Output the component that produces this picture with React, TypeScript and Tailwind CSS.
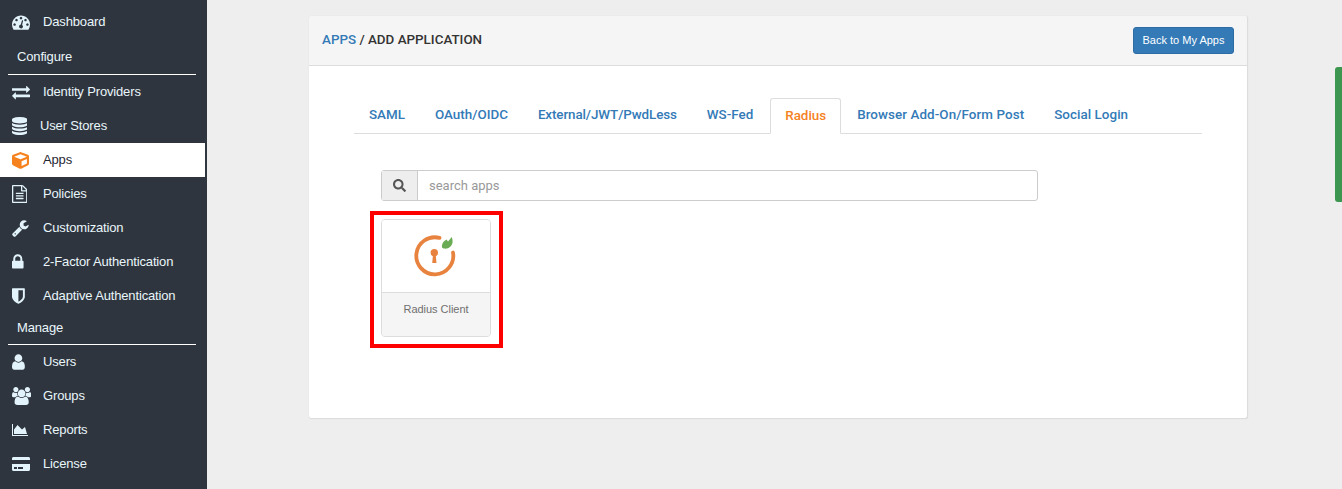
import { FaCreditCard, FaCube, FaSearch } from "react-icons/fa";

type Glyph = { box: [number, number]; size: number; d: string };

// font awesome 4 shapes, the sidebar uses these rather than the newer set
const glyphs: Record<string, Glyph> = {
  dashboard: { box: [0, 1792], size: 18, d: "M384 1152q0-53-37.500-90.500t-90.500-37.500-90.500 37.500-37.500 90.500 37.500 90.500 90.500 37.500 90.500-37.500 37.500-90.500zm192-448q0-53-37.500-90.500t-90.500-37.500-90.500 37.500-37.500 90.500 37.500 90.500 90.500 37.500 90.500-37.500 37.500-90.500zm428 481l101-382q6-26-7.500-48.500t-38.500-29.500-48 6.500-30 39.500l-101 382q-60 5-107 43.500t-63 98.500q-20 77 20 146t117 89 146-20 89-117q16-60-6-117t-72-91zm660-33q0-53-37.500-90.500t-90.500-37.500-90.500 37.500-37.500 90.500 37.500 90.500 90.500 37.500 90.500-37.500 37.500-90.500zm-640-640q0-53-37.500-90.500t-90.500-37.500-90.500 37.500-37.500 90.500 37.500 90.500 90.500 37.500 90.500-37.500 37.500-90.500zm448 192q0-53-37.500-90.500t-90.500-37.500-90.500 37.500-37.500 90.500 37.500 90.500 90.500 37.500 90.500-37.500 37.500-90.500zm320 448q0 261-141 483-19 29-54 29h-1402q-35 0-54-29-141-221-141-483 0-182 71-348t191-286 286-191 348-71 348 71 286 191 191 286 71 348z" },
  exchange: { box: [0, 1792], size: 18, d: "M1792 1184v192q0 13-9.500 22.500t-22.500 9.500h-1376v192q0 13-9.500 22.500t-22.500 9.500q-12 0-24-10l-319-320q-9-9-9-22 0-14 9-23l320-320q9-9 23-9 13 0 22.500 9.500t9.500 22.500v192h1376q13 0 22.500 9.500t9.500 22.500zm0-544q0 14-9 23l-320 320q-9 9-23 9-13 0-22.500-9.500t-9.500-22.500v-192h-1376q-13 0-22.500-9.500t-9.500-22.500v-192q0-13 9.500-22.500t22.500-9.500h1376v-192q0-14 9-23t23-9q12 0 24 10l319 319q9 9 9 23z" },
  database: { box: [128, 1536], size: 18, d: "M896 768q237 0 443-43t325-127v170q0 69-103 128t-280 93.500-385 34.500-385-34.500-280-93.500-103-128v-170q119 84 325 127t443 43zm0 768q237 0 443-43t325-127v170q0 69-103 128t-280 93.500-385 34.500-385-34.500-280-93.500-103-128v-170q119 84 325 127t443 43zm0-384q237 0 443-43t325-127v170q0 69-103 128t-280 93.500-385 34.500-385-34.500-280-93.500-103-128v-170q119 84 325 127t443 43zm0-1152q208 0 385 34.500t280 93.500 103 128v128q0 69-103 128t-280 93.500-385 34.500-385-34.500-280-93.500-103-128v-128q0-69 103-128t280-93.500 385-34.500z" },
  file: { box: [128, 1536], size: 18, d: "M1596 380q28 28 48 76t20 88v1152q0 40-28 68t-68 28h-1344q-40 0-68-28t-28-68v-1600q0-40 28-68t68-28h896q40 0 88 20t76 48zm-444-244v376h376q-10-29-22-41l-313-313q-12-12-41-22zm384 1528v-1024h-416q-40 0-68-28t-28-68v-416h-768v1536h1280zm-1024-864q0-14 9-23t23-9h704q14 0 23 9t9 23v64q0 14-9 23t-23 9h-704q-14 0-23-9t-9-23v-64zm736 224q14 0 23 9t9 23v64q0 14-9 23t-23 9h-704q-14 0-23-9t-9-23v-64q0-14 9-23t23-9h704zm0 256q14 0 23 9t9 23v64q0 14-9 23t-23 9h-704q-14 0-23-9t-9-23v-64q0-14 9-23t23-9h704z" },
  wrench: { box: [64, 1664], size: 18, d: "M448 1472q0-26-19-45t-45-19-45 19-19 45 19 45 45 19 45-19 19-45zm644-420l-682 682q-37 37-90 37-52 0-91-37l-106-108q-38-36-38-90 0-53 38-91l681-681q39 98 114.500 173.500t173.500 114.500zm634-435q0 39-23 106-47 134-164.500 217.500t-258.500 83.500q-185 0-316.500-131.500t-131.500-316.500 131.500-316.500 316.500-131.500q58 0 121.500 16.500t107.500 46.500q16 11 16 28t-16 28l-293 169v224l193 107q5-3 79-48.500t135.500-81 70.500-35.500q15 0 23.500 10t8.500 25z" },
  lock: { box: [320, 1152], size: 18, d: "M640 768h512v-192q0-106-75-181t-181-75-181 75-75 181v192zm832 96v576q0 40-28 68t-68 28h-960q-40 0-68-28t-28-68v-576q0-40 28-68t68-28h32v-192q0-184 132-316t316-132 316 132 132 316v192h32q40 0 68 28t28 68z" },
  shield: { box: [256, 1280], size: 18, d: "M1344 960v-640h-448v1137q119-63 213-137 235-184 235-360zm192-768v768q0 86-33.500 170.500t-83 150-118 127.500-126.500 103-121 77.500-89.500 49.500-42.500 20q-12 6-26 6t-26-6q-16-7-42.500-20t-89.500-49.500-121-77.500-126.500-103-118-127.500-83-150-33.500-170.500v-768q0-26 19-45t45-19h1152q26 0 45 19t19 45z" },
  user: { box: [256, 1280], size: 18, d: "M1536 1399q0 109-62.500 187t-150.500 78h-854q-88 0-150.500-78t-62.500-187q0-85 8.500-160.500t31.500-152 58.500-131 94-89 134.500-34.500q131 128 313 128t313-128q76 0 134.500 34.500t94 89 58.500 131 31.500 152 8.500 160.500zm-256-887q0 159-112.500 271.500t-271.500 112.500-271.500-112.500-112.500-271.500 112.500-271.500 271.500-112.500 271.500 112.500 112.500 271.500z" },
  group: { box: [0, 1920], size: 18, d: "M593 896q-162 5-265 128h-134q-82 0-138-40.500t-56-118.500q0-353 124-353 6 0 43.500 21t97.500 42.500 119 21.500q67 0 133-23-5 37-5 66 0 139 81 256zm1071 637q0 120-73 189.500t-194 69.500h-874q-121 0-194-69.500t-73-189.500q0-53 3.500-103.500t14-109 26.500-108.500 43-97.500 62-81 85.500-53.500 111.500-20q10 0 43 21.500t73 48 107 48 135 21.500 135-21.500 107-48 73-48 43-21.500q61 0 111.500 20t85.500 53.500 62 81 43 97.500 26.500 108.500 14 109 3.500 103.500zm-1024-1277q0 106-75 181t-181 75-181-75-75-181 75-181 181-75 181 75 75 181zm704 384q0 159-112.500 271.500t-271.500 112.500-271.500-112.500-112.500-271.500 112.500-271.500 271.500-112.500 271.500 112.500 112.500 271.500zm576 225q0 78-56 118.500t-138 40.500h-134q-103-123-265-128 81-117 81-256 0-29-5-66 66 23 133 23 59 0 119-21.500t97.500-42.500 43.500-21q124 0 124 353zm-128-609q0 106-75 181t-181 75-181-75-75-181 75-181 181-75 181 75 75 181z" },
  chart: { box: [0, 2048], size: 14, d: "M2048 1536v128h-2048v-1536h128v1408h1920zm-384-1024l256 896h-1664v-576l448-576 576 576z" },
};

function Fa4({ name, className }: { name: string; className: string }) {
  const g = glyphs[name];
  return (
    <svg viewBox={`${g.box[0]} 0 ${g.box[1]} 1792`} height={g.size} width={(g.box[1] / 1792) * g.size} fill="currentColor" className={className}>
      <path d={g.d} />
    </svg>
  );
}

type NavItem = { label: string; icon: string; active?: boolean; tight?: boolean };

const configure: NavItem[] = [
  { label: "Identity Providers", icon: "exchange" },
  { label: "User Stores", icon: "database", tight: true },
  { label: "Apps", icon: "cube", active: true },
  { label: "Policies", icon: "file" },
  { label: "Customization", icon: "wrench" },
  { label: "2-Factor Authentication", icon: "lock" },
  { label: "Adaptive Authentication", icon: "shield" },
];

const manage: NavItem[] = [
  { label: "Users", icon: "user" },
  { label: "Groups", icon: "group" },
  { label: "Reports", icon: "chart" },
  { label: "License", icon: "card" },
];

const tabs = [
  { label: "SAML", cls: "px-[15px]" },
  { label: "OAuth/OIDC", cls: "px-[15px]" },
  { label: "External/JWT/PwdLess", cls: "px-[15px] tracking-[-0.1px]" },
  { label: "WS-Fed", cls: "pr-[17px] pl-[15px]" },
  { label: "Radius", active: true, cls: "px-[14px]" },
  { label: "Browser Add-On/Form Post", cls: "pr-[15px] pl-[16px] tracking-[0.08px]" },
  { label: "Social Login", cls: "px-[15px] tracking-[0.05px]" },
];

function NavIcon({ name, tone }: { name: string; tone: string }) {
  if (name === "card") return <FaCreditCard className={`text-[18px] ${tone}`} />;
  if (name === "cube") return <FaCube className={`text-[17px] ${tone}`} />;
  return <Fa4 name={name} className={tone} />;
}

function NavRow({ item }: { item: NavItem }) {
  const tone = item.active ? "text-[#f5821f]" : "text-[#e2f3fb]";
  return (
    <div className={`flex h-[34px] items-center pl-3 text-[13px] tracking-[-0.15px] ${item.active ? "w-[205px] bg-white text-[#1f2733]" : "text-[#e9f6fb]"}`}>
      <span className={`flex items-center ${item.tight ? "w-[28px]" : "w-[31px]"}`}>
        <NavIcon name={item.icon} tone={tone} />
      </span>
      <span>{item.label}</span>
    </div>
  );
}

function SectionTitle({ label, box }: { label: string; box: string }) {
  return (
    <div className={`mr-[11px] ml-2 flex items-center border-b border-white pl-[9px] text-[13px] tracking-[-0.15px] text-[#e9f6fb] ${box}`}>
      {label}
    </div>
  );
}

function RadiusLogo() {
  return (
    <svg width="44" height="44" viewBox="0 0 44 44" fill="none">
      <path d="M25.500 3.900 A18.500 18.500 0 1 0 39 18.500" stroke="#e8833f" strokeWidth="3.800" strokeLinecap="round" />
      <circle cx="20.300" cy="18.700" r="3.700" fill="#e8833f" />
      <path d="M19 20.500h2.700l.8 8.500h-4.300z" fill="#e8833f" />
      <path d="M28 13.500c-.5-3.500 1.500-6.500 4.500-8l1.500 2 3.800-4.500c1.500 4 1 7.500-1.500 9.800-2.300 2-6 2.700-8.300.7z" fill="#6aab55" />
    </svg>
  );
}

export default function App() {
  return (
    <div className="relative flex h-[489px] w-[1342px] overflow-hidden bg-[#eeeeee] font-['Liberation_Sans',Arial,sans-serif]">
      <aside className="h-full w-[207px] shrink-0 bg-[#2f353e] pt-[5px]">
        <NavRow item={{ label: "Dashboard", icon: "dashboard" }} />
        <SectionTitle label="Configure" box="h-[36px]" />
        {configure.map((item) => (
          <NavRow key={item.label} item={item} />
        ))}
        <SectionTitle label="Manage" box="h-[32px] pb-[2px]" />
        {manage.map((item) => (
          <NavRow key={item.label} item={item} />
        ))}
      </aside>

      <main className="flex-1 pt-4 pl-[102px]">
        <div className="h-[403px] w-[939px] rounded-[3px] border-r border-b border-[#dddddd] bg-white shadow-[0_0_1px_rgba(0,0,0,0.15)]">
          <div className="flex h-[50px] items-center justify-between rounded-t-[3px] border-b border-[#dddddd] bg-[#f5f5f5] px-[13px]">
            <div className="font-['Roboto',sans-serif] text-[13.4px] font-medium text-[#333333]">
              <span className="text-[#337ab7]">APPS</span> / ADD APPLICATION
            </div>
            <button className="h-[27px] w-[101px] rounded-[3px] border border-[#2e6da4] bg-[#337ab7] text-[11px] text-white">
              Back to My Apps
            </button>
          </div>

          <div className="px-[45px] pt-8">
            <div className="flex h-9 items-end border-b border-[#dddddd] font-['Roboto',sans-serif] text-[13.4px] font-medium">
              {tabs.map((tab) => (
                <div
                  key={tab.label}
                  className={`flex h-9 items-center ${tab.cls} ${
                    tab.active
                      ? "-mb-px rounded-t-[3px] border border-[#dddddd] border-b-white bg-white text-[#f5821f]"
                      : "text-[#337ab7]"
                  }`}
                >
                  {tab.label}
                </div>
              ))}
            </div>

            <div className="mt-9 ml-[27px] flex h-[31px] w-[657px] rounded-[3px] border border-[#cccccc] bg-white">
              <span className="flex w-[36px] items-center justify-center border-r border-[#cccccc] bg-[#eeeeee] text-[13px] text-[#555555]">
                <FaSearch />
              </span>
              <span className="flex items-center pl-[11px] font-['Roboto',sans-serif] text-[13px] text-[#999999]">search apps</span>
            </div>

            <div className="mt-[10px] ml-4 box-border h-[137px] w-[133px] border-4 border-[#ff0000] px-[7px] pt-1">
              <div className="h-[118px] w-[110px] overflow-hidden rounded-[4px] border border-[#dddddd]">
                <div className="flex h-[73px] items-center justify-center border-b border-[#dddddd] bg-white">
                  <RadiusLogo />
                </div>
                <div className="h-full bg-[#f5f5f5] pt-[8px] text-center text-[11px] tracking-[-0.03px] text-[#6f6f6f]">Radius Client</div>
              </div>
            </div>
          </div>
        </div>
      </main>

      <div className="absolute top-[67px] right-0 h-[135px] w-[7px] rounded-l-[3px] bg-[#3c9650]" />
    </div>
  );
}
